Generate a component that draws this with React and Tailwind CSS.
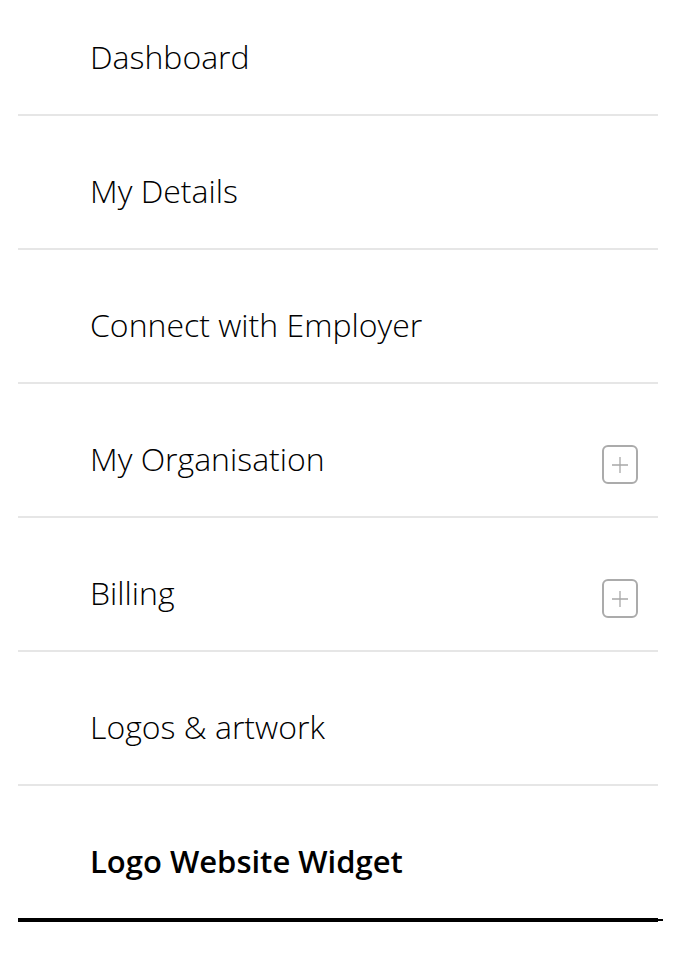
const items = [
  { label: "Dashboard" },
  { label: "My Details" },
  { label: "Connect with Employer" },
  { label: "My Organisation", expandable: true },
  { label: "Billing", expandable: true },
  { label: "Logos & artwork" },
];

function PlusBox() {
  return (
    <span className="-mb-[5px] flex h-[39px] w-[36px] items-center justify-center rounded-[6px] border-2 border-[#ababab]">
      <svg width="18" height="18" viewBox="0 0 18 18" fill="none">
        <path d="M9 1v16M1 9h16" stroke="#a8a8a8" strokeWidth="1.3" />
      </svg>
    </span>
  );
}

export default function App() {
  return (
    <div
      className="min-h-[958px] w-[700px] bg-white"
      style={{ fontFamily: '"Open Sans", "Liberation Sans", sans-serif' }}
    >
      <nav className="ml-[18px] w-[640px]">
        {items.map((item, i) => (
          <div
            key={item.label}
            className={
              "flex items-end justify-between border-b-2 border-[#e6e6e6] pb-[37px] pl-[72px] pr-[20px] " +
              (i === 0 ? "h-[116px]" : "h-[134px]")
            }
          >
            <span className="text-[32px] font-light leading-[40px] text-black">{item.label}</span>
            {item.expandable && <PlusBox />}
          </div>
        ))}
        <div className="relative flex h-[136px] items-end border-b-[4px] border-black pb-[37px] pl-[72px]">
          <span className="text-[31px] font-semibold leading-[40px] text-black">Logo Website Widget</span>
          <span className="absolute -bottom-[3px] -right-[5px] h-[2px] w-[5px] bg-black" />
        </div>
      </nav>
    </div>
  );
}
